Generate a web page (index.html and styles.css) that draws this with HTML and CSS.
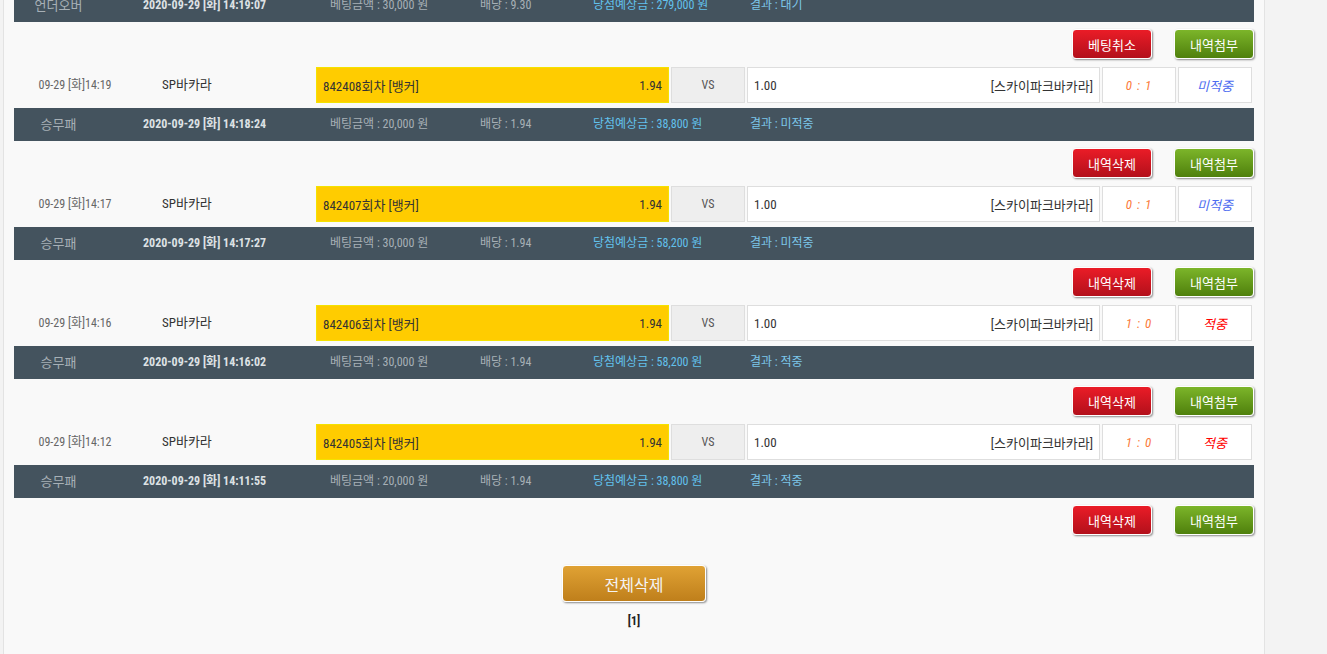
FILE: index.html
```html
<!DOCTYPE html>
<html lang="ko">
<head>
  <meta charset="UTF-8" />
  <title>베팅내역</title>
  <link rel="stylesheet" href="styles.css">
</head>
<body>
  <div class="panel">
    <div class="bet-list">

      <!-- 대기 (상단 잘림) -->
      <div class="bet-item is-tail">
        <div class="summary">
          <span class="s-type">언더오버</span>
          <span class="s-date">2020-09-29 [화] 14:19:07</span>
          <span class="s-amount">베팅금액 : 30,000 원</span>
          <span class="s-rate">배당 : 9.30</span>
          <span class="s-win">당첨예상금 : 279,000 원</span>
          <span class="s-result">결과 : 대기</span>
        </div>
        <div class="actions">
          <button class="btn btn-red">베팅취소</button>
          <button class="btn btn-green">내역첨부</button>
        </div>
      </div>

      <div class="bet-item">
        <div class="bet-row">
          <div class="c-date">09-29 [화]14:19</div>
          <div class="c-game">SP바카라</div>
          <div class="box box-home selected"><span>842408회차 [뱅커]</span><span>1.94</span></div>
          <div class="box box-vs">VS</div>
          <div class="box box-away"><span>1.00</span><span>[스카이파크바카라]</span></div>
          <div class="box box-score">0 : 1</div>
          <div class="box box-result lose">미적중</div>
        </div>
        <div class="summary">
          <span class="s-type">승무패</span>
          <span class="s-date">2020-09-29 [화] 14:18:24</span>
          <span class="s-amount">베팅금액 : 20,000 원</span>
          <span class="s-rate">배당 : 1.94</span>
          <span class="s-win">당첨예상금 : 38,800 원</span>
          <span class="s-result">결과 : 미적중</span>
        </div>
        <div class="actions">
          <button class="btn btn-red">내역삭제</button>
          <button class="btn btn-green">내역첨부</button>
        </div>
      </div>

      <div class="bet-item">
        <div class="bet-row">
          <div class="c-date">09-29 [화]14:17</div>
          <div class="c-game">SP바카라</div>
          <div class="box box-home selected"><span>842407회차 [뱅커]</span><span>1.94</span></div>
          <div class="box box-vs">VS</div>
          <div class="box box-away"><span>1.00</span><span>[스카이파크바카라]</span></div>
          <div class="box box-score">0 : 1</div>
          <div class="box box-result lose">미적중</div>
        </div>
        <div class="summary">
          <span class="s-type">승무패</span>
          <span class="s-date">2020-09-29 [화] 14:17:27</span>
          <span class="s-amount">베팅금액 : 30,000 원</span>
          <span class="s-rate">배당 : 1.94</span>
          <span class="s-win">당첨예상금 : 58,200 원</span>
          <span class="s-result">결과 : 미적중</span>
        </div>
        <div class="actions">
          <button class="btn btn-red">내역삭제</button>
          <button class="btn btn-green">내역첨부</button>
        </div>
      </div>

      <div class="bet-item">
        <div class="bet-row">
          <div class="c-date">09-29 [화]14:16</div>
          <div class="c-game">SP바카라</div>
          <div class="box box-home selected"><span>842406회차 [뱅커]</span><span>1.94</span></div>
          <div class="box box-vs">VS</div>
          <div class="box box-away"><span>1.00</span><span>[스카이파크바카라]</span></div>
          <div class="box box-score">1 : 0</div>
          <div class="box box-result win">적중</div>
        </div>
        <div class="summary">
          <span class="s-type">승무패</span>
          <span class="s-date">2020-09-29 [화] 14:16:02</span>
          <span class="s-amount">베팅금액 : 30,000 원</span>
          <span class="s-rate">배당 : 1.94</span>
          <span class="s-win">당첨예상금 : 58,200 원</span>
          <span class="s-result">결과 : 적중</span>
        </div>
        <div class="actions">
          <button class="btn btn-red">내역삭제</button>
          <button class="btn btn-green">내역첨부</button>
        </div>
      </div>

      <div class="bet-item">
        <div class="bet-row">
          <div class="c-date">09-29 [화]14:12</div>
          <div class="c-game">SP바카라</div>
          <div class="box box-home selected"><span>842405회차 [뱅커]</span><span>1.94</span></div>
          <div class="box box-vs">VS</div>
          <div class="box box-away"><span>1.00</span><span>[스카이파크바카라]</span></div>
          <div class="box box-score">1 : 0</div>
          <div class="box box-result win">적중</div>
        </div>
        <div class="summary">
          <span class="s-type">승무패</span>
          <span class="s-date">2020-09-29 [화] 14:11:55</span>
          <span class="s-amount">베팅금액 : 20,000 원</span>
          <span class="s-rate">배당 : 1.94</span>
          <span class="s-win">당첨예상금 : 38,800 원</span>
          <span class="s-result">결과 : 적중</span>
        </div>
        <div class="actions">
          <button class="btn btn-red">내역삭제</button>
          <button class="btn btn-green">내역첨부</button>
        </div>
      </div>

    </div>

    <div class="list-footer">
      <button class="btn-all">전체삭제</button>
      <div class="paging">[1]</div>
    </div>
  </div>
</body>
</html>
```

FILE: styles.css
```css
body {
  margin: 0;
  background: #f3f3f3;
  font-family: "Roboto Condensed", "Liberation Sans Narrow", "DejaVu Sans Condensed", Roboto, "Noto Sans CJK KR", sans-serif;
  font-size: 12px;
  color: #333;
  overflow: hidden;
}

.panel {
  margin-left: 3px;
  width: 1240px;
  min-height: 700px;
  background: #f9f9f9;
  border-left: 1px solid #e3e3e3;
  border-right: 1px solid #e3e3e3;
  padding: 0 10px;
}

.bet-list {
  margin-top: -11px;
}

.bet-item {
  display: flex;
  flex-direction: column;
}

/* bet row */
.bet-row {
  display: flex;
  gap: 2px;
  height: 36px;
  padding-right: 2px;
  margin-bottom: 5px;
}

.c-date {
  width: 122px;
  text-align: center;
  line-height: 36px;
  color: #666;
}

.c-game {
  width: 152px;
  padding-left: 24px;
  line-height: 36px;
  font-size: 13px;
  color: #333;
}

.box {
  box-sizing: border-box;
  height: 36px;
  border: 1px solid #dedede;
  background: #fff;
  display: flex;
  align-items: center;
  font-size: 13px;
}

.box-home,
.box-away {
  width: 353px;
  justify-content: space-between;
  padding: 0 6px;
}

.box-home.selected {
  background: #ffcc00;
  border-color: #f4e200;
}

.box-vs {
  width: 74px;
  justify-content: center;
  background: #eeeeee;
  font-size: 12px;
  color: #555;
}

.box-score,
.box-result {
  width: 74px;
  justify-content: center;
  font-style: italic;
}

.box-score {
  color: #fb7a3a;
  letter-spacing: 1px;
}

.lose { color: #4d6cf0; }
.win { color: #ff0000; }

/* summary bar */
.summary {
  display: flex;
  height: 33px;
  line-height: 33px;
  background: #44535e;
  color: #a7b0b6;
  white-space: nowrap;
}

.s-type {
  width: 89px;
  text-align: center;
  font-size: 13px;
}

.s-date {
  width: 187px;
  padding-left: 40px;
  font-weight: bold;
  color: #dde1e4;
}

.s-amount { width: 150px; }
.s-rate { width: 113px; }
.s-win { width: 157px; color: #62c1ec; }
.s-result { color: #7cc6ea; }

/* buttons */
.actions {
  display: flex;
  justify-content: flex-end;
  gap: 22px;
  margin: 7px 0 8px;
}

.btn {
  width: 80px;
  height: 30px;
  border: 1px solid #fff;
  border-radius: 4px;
  box-shadow: 1px 1px 2px rgba(0, 0, 0, 0.45);
  color: #fff;
  font-family: "Noto Sans CJK KR", sans-serif;
  font-size: 13px;
  padding: 0;
  cursor: pointer;
}

.btn-red { background: linear-gradient(#ea1c27, #b3101b); }
.btn-green { background: linear-gradient(#7cb52a, #4f800c); }

.list-footer {
  display: flex;
  flex-direction: column;
  align-items: center;
  padding-top: 22px;
}

.btn-all {
  width: 144px;
  height: 37px;
  border: 1px solid #fff;
  border-radius: 4px;
  box-shadow: 1px 1px 2px rgba(0, 0, 0, 0.45);
  background: linear-gradient(#e0a234, #bf7f1b);
  color: #f4f4f4;
  font-family: "Noto Sans CJK KR", sans-serif;
  font-size: 16px;
  padding: 0;
}

.paging {
  margin-top: 12px;
  font-weight: bold;
  color: #222;
}
```
